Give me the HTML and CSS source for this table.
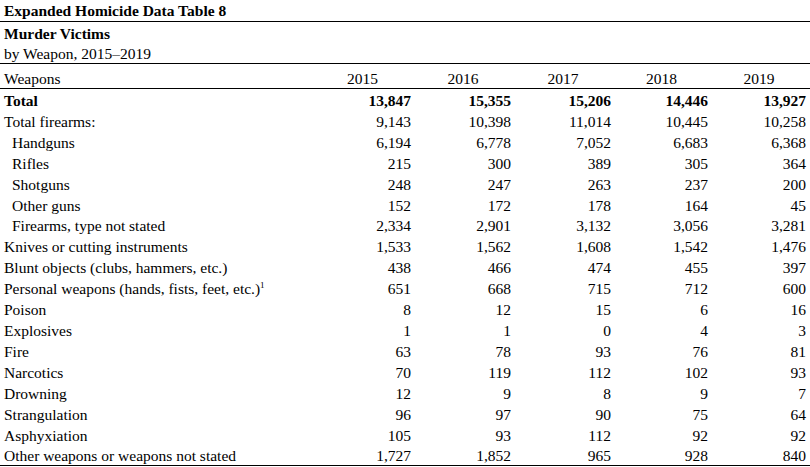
FILE: index.html
```html
<!DOCTYPE html>
<html>
<head>
<meta charset="utf-8">
<link rel="stylesheet" href="styles.css">
</head>
<body>
<div class="page">
  <div class="title">Expanded Homicide Data Table 8</div>
  <div class="sub">
    <div class="subtitle">Murder Victims</div>
    <div class="subline">by Weapon, 2015–2019</div>
  </div>
  <table class="data">
    <colgroup>
      <col class="c0"><col class="c1"><col class="c2"><col class="c3"><col class="c4"><col class="c5">
    </colgroup>
    <thead>
      <tr><th class="lab">Weapons</th><th>2015</th><th>2016</th><th>2017</th><th>2018</th><th>2019</th></tr>
    </thead>
    <tbody>
      <tr class="bold"><td class="lab">Total</td><td>13,847</td><td>15,355</td><td>15,206</td><td>14,446</td><td>13,927</td></tr>
      <tr><td class="lab">Total firearms:</td><td>9,143</td><td>10,398</td><td>11,014</td><td>10,445</td><td>10,258</td></tr>
      <tr><td class="lab ind">Handguns</td><td>6,194</td><td>6,778</td><td>7,052</td><td>6,683</td><td>6,368</td></tr>
      <tr><td class="lab ind">Rifles</td><td>215</td><td>300</td><td>389</td><td>305</td><td>364</td></tr>
      <tr><td class="lab ind">Shotguns</td><td>248</td><td>247</td><td>263</td><td>237</td><td>200</td></tr>
      <tr><td class="lab ind">Other guns</td><td>152</td><td>172</td><td>178</td><td>164</td><td>45</td></tr>
      <tr><td class="lab ind">Firearms, type not stated</td><td>2,334</td><td>2,901</td><td>3,132</td><td>3,056</td><td>3,281</td></tr>
      <tr><td class="lab">Knives or cutting instruments</td><td>1,533</td><td>1,562</td><td>1,608</td><td>1,542</td><td>1,476</td></tr>
      <tr><td class="lab">Blunt objects (clubs, hammers, etc.)</td><td>438</td><td>466</td><td>474</td><td>455</td><td>397</td></tr>
      <tr><td class="lab">Personal weapons (hands, fists, feet, etc.)<sup>1</sup></td><td>651</td><td>668</td><td>715</td><td>712</td><td>600</td></tr>
      <tr><td class="lab">Poison</td><td>8</td><td>12</td><td>15</td><td>6</td><td>16</td></tr>
      <tr><td class="lab">Explosives</td><td>1</td><td>1</td><td>0</td><td>4</td><td>3</td></tr>
      <tr><td class="lab">Fire</td><td>63</td><td>78</td><td>93</td><td>76</td><td>81</td></tr>
      <tr><td class="lab">Narcotics</td><td>70</td><td>119</td><td>112</td><td>102</td><td>93</td></tr>
      <tr><td class="lab">Drowning</td><td>12</td><td>9</td><td>8</td><td>9</td><td>7</td></tr>
      <tr><td class="lab">Strangulation</td><td>96</td><td>97</td><td>90</td><td>75</td><td>64</td></tr>
      <tr><td class="lab">Asphyxiation</td><td>105</td><td>93</td><td>112</td><td>92</td><td>92</td></tr>
      <tr class="last"><td class="lab">Other weapons or weapons not stated</td><td>1,727</td><td>1,852</td><td>965</td><td>928</td><td>840</td></tr>
    </tbody>
  </table>
</div>
</body>
</html>
```

FILE: styles.css
```css
html, body {
  margin: 0;
  padding: 0;
  background: #ffffff;
}
body {
  font-family: "Liberation Serif", "Times New Roman", serif;
  font-size: 15.5px;
  color: #000000;
}
.page {
  width: 810px;
}
.title {
  font-weight: bold;
  height: 21px;
  line-height: 21px;
  padding-left: 4px;
  border-bottom: 1px solid #000;
}
.sub {
  height: 41px;
  padding-left: 4px;
  border-bottom: 1px solid #000;
}
.subtitle {
  font-weight: bold;
  height: 21px;
  line-height: 23px;
}
.subline {
  height: 20px;
  line-height: 21px;
}
.data {
  width: 810px;
  border-collapse: collapse;
  table-layout: fixed;
}
.c0 { width: 314px; }
.c1 { width: 101px; }
.c2 { width: 100px; }
.c3 { width: 100px; }
.c4 { width: 97px; }
.c5 { width: 98px; }
.data th {
  font-weight: normal;
  text-align: center;
  padding: 6px 4px 0 0;
  height: 18px;
  line-height: 18px;
  border-bottom: 1px solid #000;
}
.data th.lab {
  text-align: left;
  padding-left: 4px;
}
.data td {
  text-align: right;
  padding: 4px 4px 0 0;
  height: 16.9px;
  line-height: 16.9px;
  white-space: nowrap;
}
.data td.lab {
  text-align: left;
  padding-left: 4px;
}
.data td.ind {
  padding-left: 12px;
}
.bold td {
  font-weight: bold;
}
.last td {
  border-bottom: 1px solid #000;
}
sup {
  font-size: 9px;
  line-height: 0;
  vertical-align: 6px;
}
```
